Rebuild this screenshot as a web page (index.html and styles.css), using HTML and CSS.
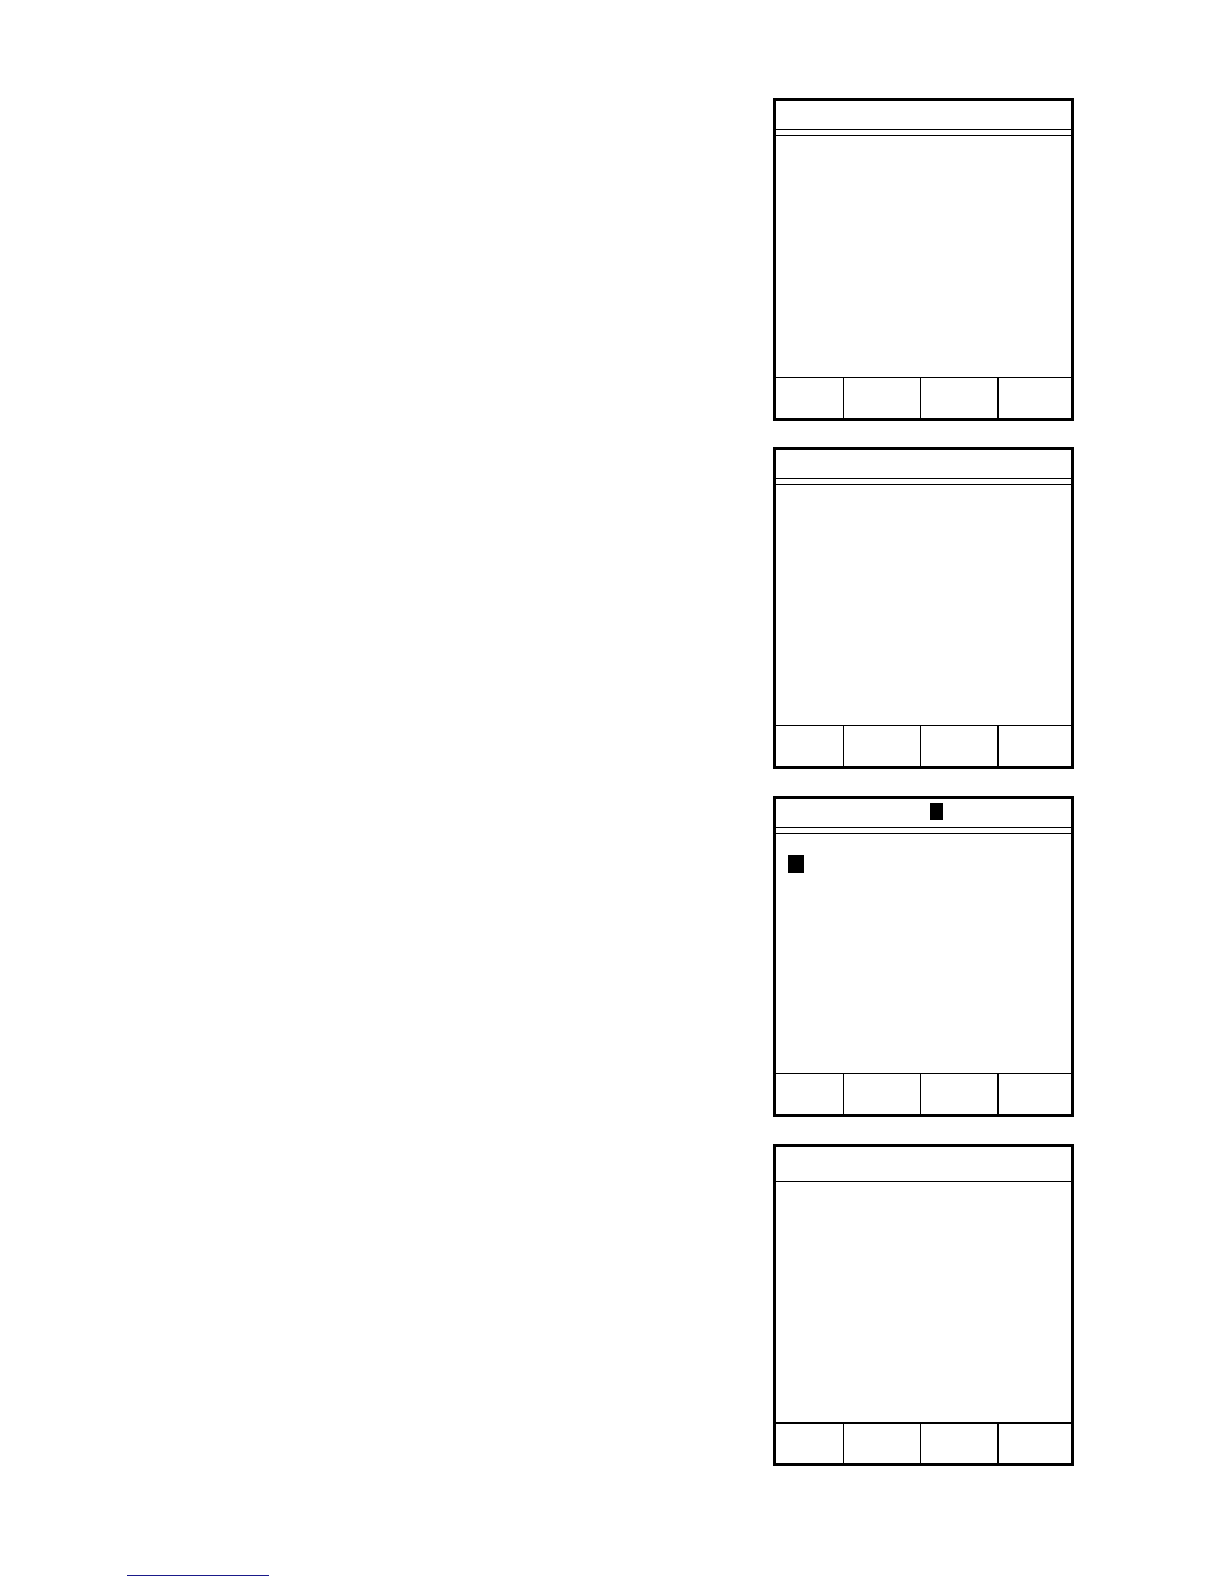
FILE: index.html
```html
<!DOCTYPE html>
<html lang="en">
<head>
<meta charset="utf-8">
<title>Display screens</title>
<link rel="stylesheet" href="styles.css">
</head>
<body>
<div class="page">
  <div class="screens">
    <div class="screen">
      <div class="hdr"></div>
      <div class="dbl"></div>
      <div class="body"></div>
      <div class="keys">
        <div class="key k1"></div><div class="key k2"></div><div class="key k3"></div><div class="key k4"></div>
      </div>
    </div>
    <div class="screen s2">
      <div class="hdr"></div>
      <div class="dbl"></div>
      <div class="body"></div>
      <div class="keys">
        <div class="key k1"></div><div class="key k2"></div><div class="key k3"></div><div class="key k4"></div>
      </div>
    </div>
    <div class="screen s3">
      <div class="hdr"><span class="blk hblk"></span></div>
      <div class="dbl"></div>
      <div class="body"><span class="blk bblk"></span></div>
      <div class="keys">
        <div class="key k1"></div><div class="key k2"></div><div class="key k3"></div><div class="key k4"></div>
      </div>
    </div>
    <div class="screen s4">
      <div class="hdr hdr-single"></div>
      <div class="body body-single"></div>
      <div class="keys keys-thick">
        <div class="key k1"></div><div class="key k2"></div><div class="key k3"></div><div class="key k4"></div>
      </div>
    </div>
  </div>
  <div class="footer"><span class="rule"></span></div>
</div>
</body>
</html>
```

FILE: styles.css
```css
html, body {
  margin: 0;
  padding: 0;
  background: #ffffff;
  font-family: "Liberation Sans", Arial, sans-serif;
}

.page {
  width: 1224px;
  height: 1584px;
  box-sizing: border-box;
  padding-top: 98px;
  display: flex;
  flex-direction: column;
}

.screens {
  display: flex;
  flex-direction: column;
  padding-left: 773px;
  gap: 26px;
}

.screen {
  width: 301px;
  height: 323px;
  box-sizing: border-box;
  border: 3px solid #000;
  display: flex;
  flex-direction: column;
}

.s2 { height: 322px; margin-top: 0; }
.s3 { height: 321px; margin-top: 1px; }
.s4 { height: 322px; margin-top: 1px; }

.hdr {
  height: 28px;
  flex: none;
  display: flex;
  align-items: flex-start;
}

.dbl {
  height: 5px;
  flex: none;
  border-top: 1px solid #000;
  border-bottom: 1px solid #000;
}

.body {
  flex: 1;
  display: flex;
  align-items: flex-start;
}

.keys {
  height: 40px;
  flex: none;
  border-top: 1px solid #000;
  display: flex;
}

.key { height: 100%; }
.k1 { width: 67px; }
.k2 { width: 76px; border-left: 1px solid #000; }
.k3 { width: 76px; border-left: 1px solid #000; }
.k4 { flex: 1; border-left: 2px solid #000; }

.hdr-single {
  height: 34px;
  border-bottom: 1px solid #000;
}

.keys-thick {
  height: 39px;
  border-top: 2px solid #000;
}

.blk {
  display: block;
  background: #000;
}

.hblk {
  width: 13px;
  height: 17px;
  margin-left: 154px;
  margin-top: 4px;
}

.bblk {
  width: 16px;
  height: 18px;
  margin-left: 12px;
  margin-top: 21px;
}

.footer {
  margin-top: auto;
  padding-left: 127px;
  padding-bottom: 8px;
}

.rule {
  display: block;
  width: 142px;
  height: 1px;
  background: #1a1a8a;
}
```
